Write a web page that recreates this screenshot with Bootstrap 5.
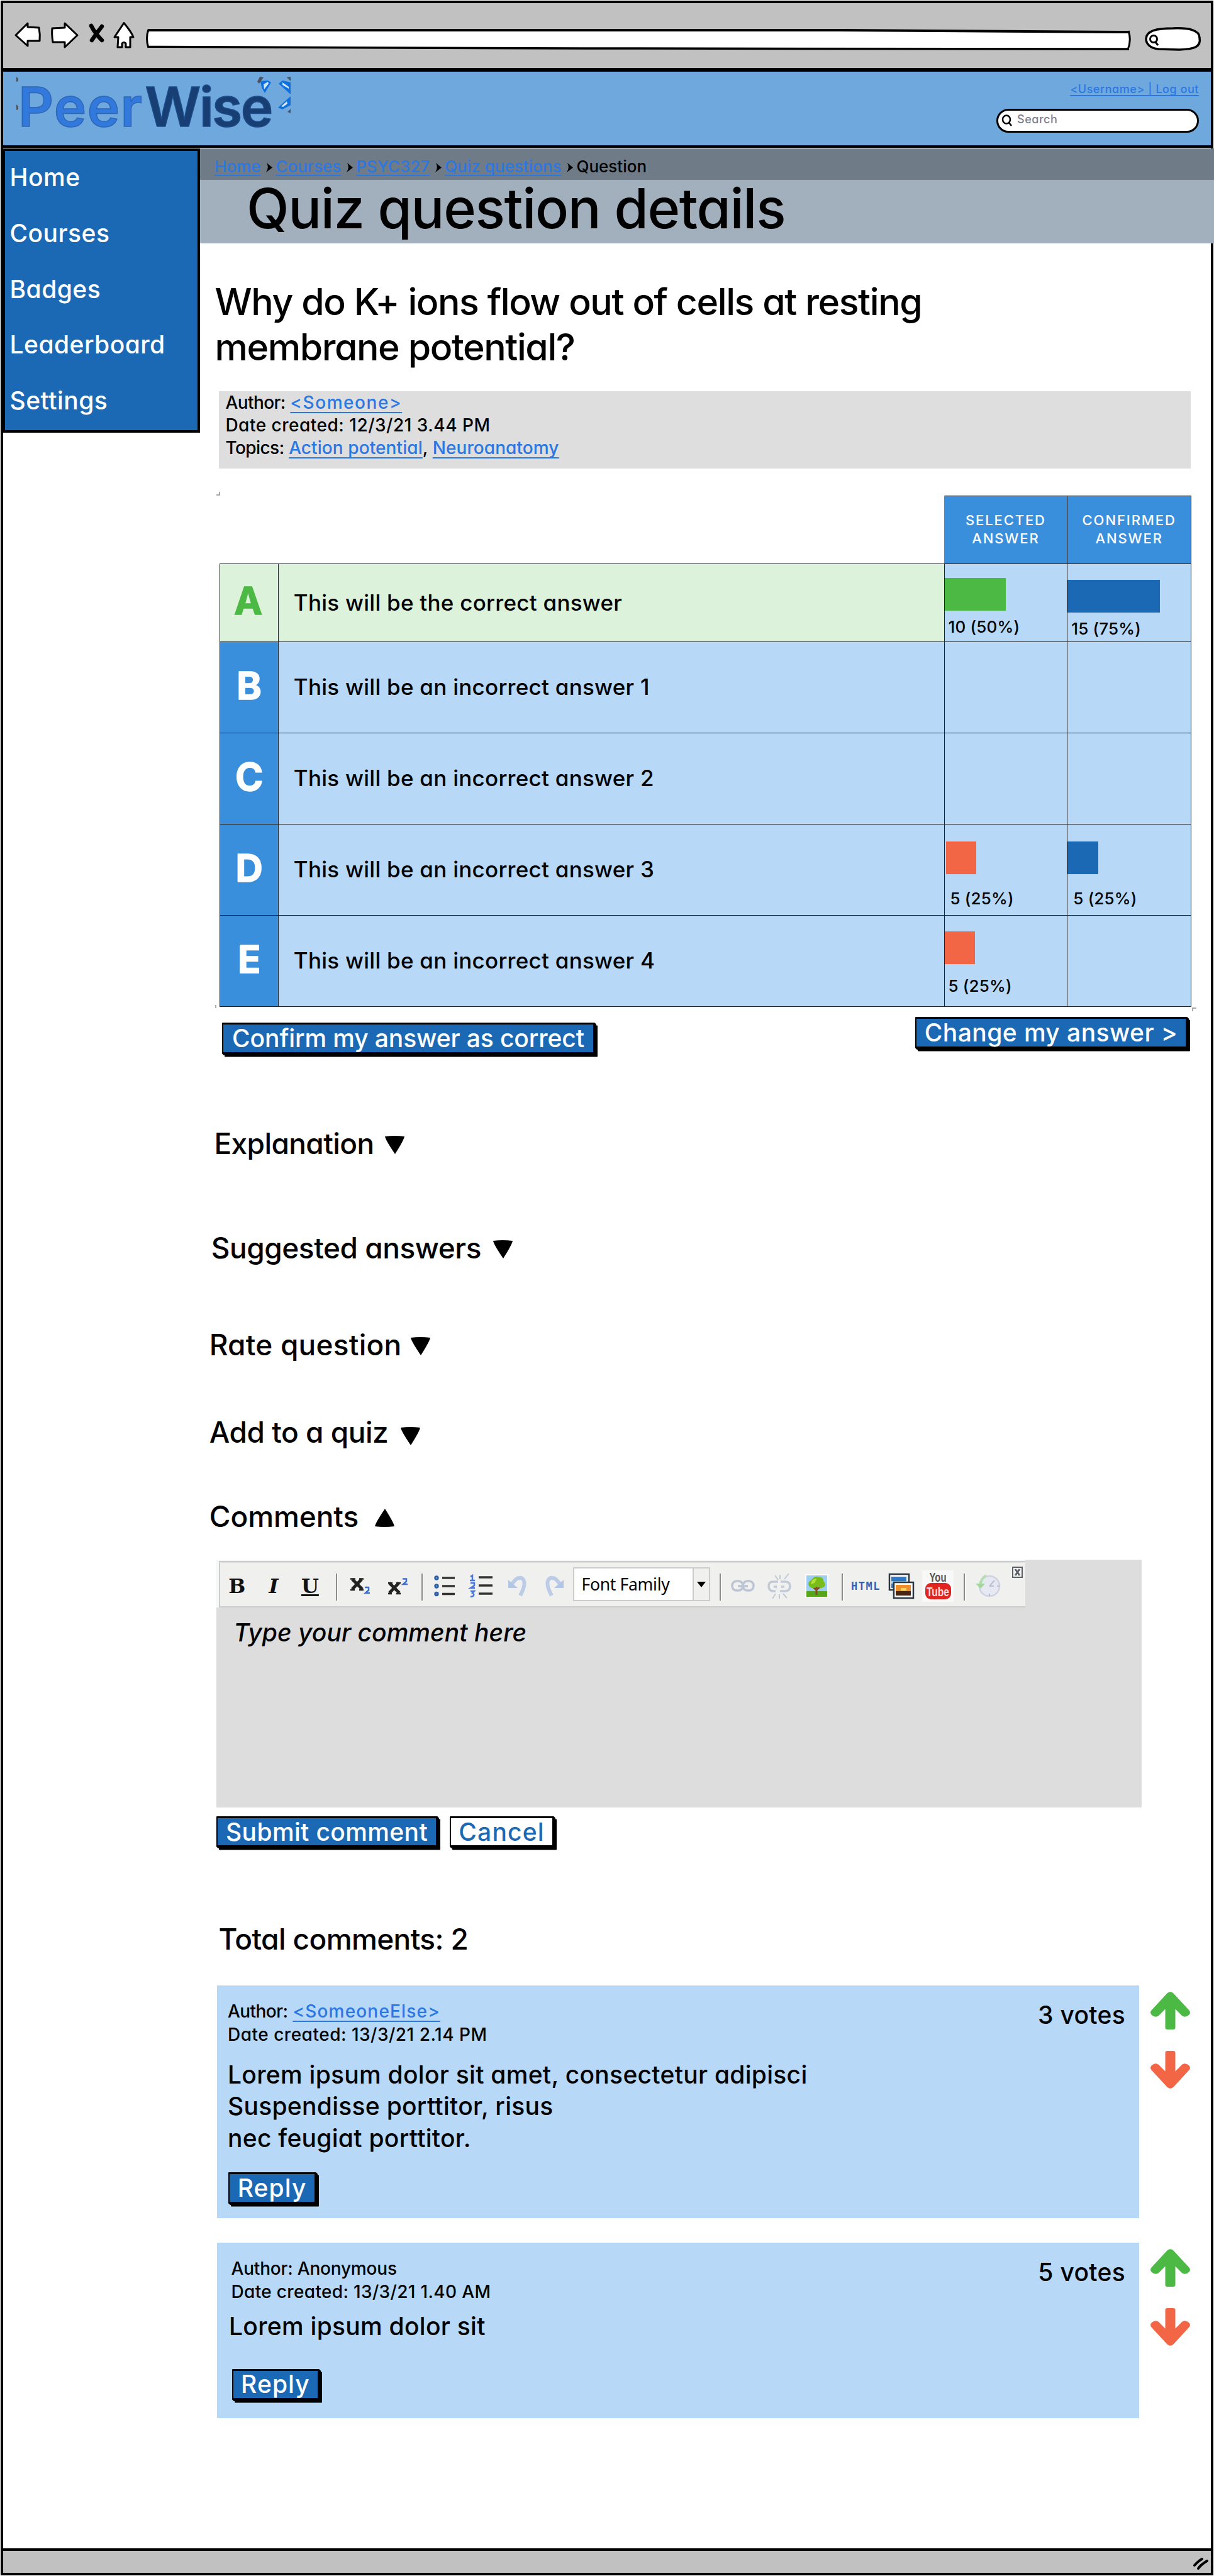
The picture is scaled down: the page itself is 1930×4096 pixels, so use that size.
<!DOCTYPE html>
<html lang="en">
<head>
<meta charset="utf-8">
<meta name="viewport" content="width=device-width, initial-scale=1">
<title>PeerWise - Quiz question details</title>
<link href="https://cdn.jsdelivr.net/npm/bootstrap@5.3.0/dist/css/bootstrap.min.css" rel="stylesheet">
<style>
  :root { --blue:#1b69b4; --mid:#3a8fdc; --pale:#b7d8f7; --link:#2b78e4; --green:#4cb944; --red:#f26645; }
  body { background:#fff; color:#000; font-family:Inter,"Liberation Sans",sans-serif; font-weight:500; font-feature-settings:"cv11"; }
  svg { display:block; overflow:visible; flex:none; }
  a { color:var(--link); text-decoration:underline; text-decoration-thickness:2px; text-underline-offset:5px; text-decoration-skip-ink:none; }
  .window { width:1930px; height:4096px; border:1px solid #fff; }
  .frame { height:100%; border:4px solid #000; }

  .chrome { height:109px; background:#c1c1c1; border-bottom:6px solid #000; padding:30px 14px 0 18px; }
  .chrome .stop { margin:3px 0 0 18px; }
  .chrome .home { margin:0 0 0 14px; }
  .chrome .address { margin:11px 0 0 18px; }
  .chrome .finder { margin:8px 0 0 22px; }
  .site-header { height:121px; background:#6fa8dc; border-bottom:4px solid #000; padding:0 19px 0 24px; }
  .brand { font-size:87px; line-height:111px; font-weight:600; color:#3179dc; -webkit-text-stroke:1.5px #2f66b5; letter-spacing:.016em; }
  .brand b { font-weight:600; color:#173f73; -webkit-text-stroke:1.5px #1d4c8c; letter-spacing:-.027em; margin-left:3px; }
  .sparkle { position:absolute; left:-4px; top:7px; }
  .account { font-size:18px; line-height:20px; letter-spacing:.03em; margin-top:18px; text-underline-offset:3px; text-decoration-thickness:1.5px; }
  .search-box { width:322px; height:38px; margin-top:21px; background:#fff; border:3.5px solid #000; border-radius:19px; padding:0 0 3px 5px; font-size:18px; color:#7e7e8c; letter-spacing:.03em; gap:7px; }
  .search-box span { margin-top:-3px; }

  .side { width:313px; height:452px; margin-top:1px; background:var(--blue); border:4px solid #000; border-left-width:3px; padding:0 0 0 7.5px; font-size:39px; letter-spacing:.012em; }
  .side a { color:#fff; text-decoration:none; line-height:83.5px; height:89px; white-space:nowrap; }
  .main-col { margin:1px -5px 0 0; width:1612px; white-space:nowrap; }
  .crumbs { height:50px; background:#6f7b87; padding:15.5px 0 0 23px; font-size:26px; line-height:26px; }
  .crumbs a { text-underline-offset:4px; }
  .crumbs svg { margin:7px 5px 0 9px; }
  .title-bar { height:101px; background:#a2afbd; padding-left:74px; margin:0; font-size:88px; line-height:90px; font-weight:500; letter-spacing:-.0155em; }
  .question { margin:56.5px 0 0 23.5px; font-size:59px; line-height:72.5px; font-weight:500; letter-spacing:-.0242em; }
  .info { margin:33px 0 0 30.4px; width:1545px; height:123px; background:#dedede; padding-left:10px; font-size:28px; line-height:36.4px; letter-spacing:.003em; }
  .dated { letter-spacing:.018em; }
  .wide { letter-spacing:.055em; }
  .label { letter-spacing:-.02em; }

  .sheet { width:1576px; }
  .answers { margin:43px 0 0 31px; width:1545px; table-layout:fixed; border-collapse:collapse; }
  .c1 { width:93.3px; } .c3 { width:195.8px; } .c4 { width:196.7px; }
  .answers td, .answers th { border:1.5px solid #1d2329; padding:0; }
  .answers .blank { border-color:transparent transparent #1d2329 transparent; }
  .answers thead th { background:var(--mid); color:#fff; height:108px; font-size:22px; line-height:29px; font-weight:500; letter-spacing:.086em; text-align:center; }
  .answers thead th.blank { background:none; }
  .answers tbody tr { height:145.1px; }
  .answers tbody tr:first-child { height:124px; }
  .answers tbody th { background:var(--mid); color:#fff; font-size:60px; line-height:60px; font-weight:700; text-align:center; -webkit-text-stroke:1.5px currentColor; vertical-align:middle; padding-bottom:6px; }
  .answers tbody td { background:var(--pale); font-size:35px; line-height:40px; letter-spacing:.0073em; vertical-align:middle; padding:0 0 1px 23.5px; }
  .answers .right-row th, .answers .right-row td:nth-child(2) { background:#dcf2db; }
  .answers .right-row th { color:var(--green); padding-right:3px; }
  .answers tbody td.tally { padding:0; vertical-align:top; font-size:26px; line-height:26px; letter-spacing:.006em; }
  .bar { height:52px; margin-bottom:13px; }
  .tally span { display:block; padding-left:6px; }
  .t1 { margin-top:22px; } .t2 { margin-top:25px; }
  .far { margin:27px 0 26.5px; } .near { margin-bottom:22px; }
  .inset { margin-left:2px; }
  .tally .in { padding-left:9px; }

  .sk { height:49.5px; background:var(--blue); color:#fff; border:3.5px solid #000; border-width:3.5px 3px 3.5px 2.5px; border-radius:1px; box-shadow:1px 1px 0 #000,2px 2px 0 #000,4px 4.5px 0 #000; font-size:39px; line-height:42px; font-weight:500; text-align:center; padding:0; }
  .sk-light { background:#fff; color:var(--blue); }
  .actions { height:60px; margin:16.5px 0 0 35px; width:1535px; }
  .confirm { width:593px; margin-top:9px; letter-spacing:-.0027em; }
  .change { width:433px; letter-spacing:.011em; }

  .fold { font-size:46px; line-height:46px; font-weight:500; margin:0; }
  .fold svg { margin-top:11px; }
  .f1 { margin:118px 0 0 22.4px; letter-spacing:-.013em; gap:18px; }
  .f2 { margin:120px 0 0 17.7px; letter-spacing:-.0098em; gap:19px; }
  .f3 { margin:107.7px 0 0 14.7px; letter-spacing:.005em; gap:15px; }
  .f4 { margin:92.7px 0 0 14.8px; letter-spacing:-.0105em; gap:20px; }
  .f4 svg { margin-top:15px; }
  .f5 { margin:88px 0 0 14.8px; letter-spacing:-.0015em; gap:26px; }

  .editor { margin:46.7px 0 0 25.7px; width:1471px; height:393.5px; background:#ddd; }
  .tools-edge { width:1286px; padding:2px 0 0 4.8px; background:#f3f7f7; }
  .tools { height:73.5px; background:#f0f0ee; border:solid #ccc; border-width:2px 0 2.5px 2px; box-shadow:inset 0 1px 0 #e2e2e0; }
  .slot { width:58px; display:flex; justify-content:center; align-items:center; padding-top:5px; font-family:"DejaVu Serif",serif; font-weight:700; font-size:32px; line-height:1; color:#111; flex:none; }
  .slot:first-child { margin-left:-2.6px; }
  .slot-html { font:700 17px "DejaVu Sans Mono",monospace; color:#3561b4; letter-spacing:1.5px; padding-left:3px; }
  .rule-v { width:20px; flex:none; padding:18px 0 0 12px; }
  .rule-v::before { content:""; display:block; width:3px; height:43px; background:#8f8a8c; border-right:1px solid #fff; }
  .font-pick { width:217.5px; height:54px; margin:8px 3px 0 1.6px; border:2px solid #ccc; background:#fff; font:400 26.5px/50px "Noto Sans","Open Sans",sans-serif; letter-spacing:-.3px; padding-left:11px; flex:none; }
  .font-pick i { width:26px; border-left:2px solid #ccc; background:#f0f0ee; display:flex; align-items:center; justify-content:center; }
  .shut { margin:7px 0 0 11px; }
  .ghost { margin:20.5px 0 0 27.5px; font-size:39px; line-height:40px; font-style:italic; letter-spacing:.001em; }
  .send { margin:14px 0 0 25.8px; height:50px; gap:18.5px; }
  .submit-btn { width:352.5px; letter-spacing:.0094em; } .cancel-btn { width:166.5px; letter-spacing:.03em; }
  .total { margin:122px 0 0 29.5px; font-size:46px; line-height:46px; letter-spacing:-.0132em; }

  .post-row { margin:51.5px 0 0 27px; gap:18px; }
  .post-row + .post-row { margin-top:39.3px; }
  .post { width:1466px; height:369.7px; background:var(--pale); padding:23px 0 0 17px; }
  .post-short { height:279px; }
  .meta { font-size:28px; line-height:36.4px; letter-spacing:.018em; }
  .link-wide { letter-spacing:.042em; }
  .said { font-size:39px; line-height:50.7px; letter-spacing:.007em; margin:20.5px 0 0 0; }
  .reply { width:139.5px; letter-spacing:.028em; margin-top:28.5px; margin-left:1.3px; }
  .post-short .meta { padding-left:5.5px; letter-spacing:.012em; }
  .post-short .label { letter-spacing:-.007em; }
  .post-short .said { margin:11.3px 0 0 2px; }
  .post-short .reply { margin-top:42.5px; margin-left:6.7px; }
  .votes { font-size:39px; line-height:40px; letter-spacing:.008em; margin:4px 22px 0 0; }
  .arrows { gap:34.4px; padding-top:9.5px; }

  .status { height:39px; background:#c1c1c1; border-top:4px solid #000; padding:11px 4px 0 0; }
  .corner { position:absolute; border:0 solid #aaa; }
  .m1 { left:25.5px; top:-6px; width:6px; height:6px; border-width:0 2.5px 2.5px 0; }
  .m2 { right:-8px; bottom:-7px; width:7px; height:6px; border-width:2px 0 0 2px; }
  .m3 { left:24px; bottom:-2px; width:2px; height:5px; border-left-width:2px; }
</style>
</head>
<body>
<div class="window">
<div class="frame d-flex flex-column">

  <div class="chrome d-flex align-items-start">
    <svg width="42" height="40" viewBox="0 0 42 40" fill="#fff" stroke="#000" stroke-width="3" stroke-linejoin="round"><path d="M21 2 2 21 21 38V30H40Q41 20 39 9L21 8Z"/></svg>
    <svg class="ms-3" width="43" height="41" viewBox="0 0 43 41" fill="#fff" stroke="#000" stroke-width="3" stroke-linejoin="round"><path d="M22 2 42 21 22 40V32H3Q1 20 2 10L22 9Z"/></svg>
    <svg class="stop" width="24" height="30" viewBox="0 0 24 30" fill="none" stroke="#000" stroke-width="6.500" stroke-linecap="round"><path d="M3 3Q9 15 20 26M20 4Q12 14 4 26"/></svg>
    <svg class="home" width="34" height="41" viewBox="0 0 34 41" fill="#fff" stroke="#000" stroke-width="3" stroke-linejoin="round"><path d="M17 1.500 2 24H8L7 40H14V34Q17 31 20 34V40H27V24H32Q29 16 17 1.500Z"/></svg>
    <svg class="address" width="1566" height="34" viewBox="0 0 1566 34" fill="#fff" stroke="#000"><path stroke="none" d="M3 3H1564V31H3Z"/><path stroke-width="4" d="M3 2H1100L1564 5"/><path stroke-width="3.500" d="M4 28.500 700 31 1563 32"/><path stroke-width="3" fill="none" d="M4 1Q-1 15 4 30M1562 3Q1567 18 1561 33"/></svg>
    <svg class="finder" width="90" height="38" viewBox="0 0 90 38" fill="#fff" stroke="#000"><path stroke-width="3.500" d="M45 2C70 1 87 5 87 17C90 32 78 35 55 36L22 35C8 34 2 26 2 19C2 6 18 2 45 2Z"/><g fill="none" stroke-width="3"><ellipse cx="14" cy="19" rx="5.500" ry="5.500"/><path d="M17 24 21 29"/></g></svg>
  </div>

  <header class="site-header d-flex justify-content-between">
    <div class="brand position-relative">Peer<b>Wise</b>
      <svg class="sparkle" width="440" height="60" viewBox="0 0 440 60">
        <g fill="#0f6fdc"><path d="M389 8 401 7 406 10 396 27 391 18Z"/><path d="M437 10 424 7 418 12 437 29Z"/><path d="M437 32 417 50 424 53 437 46Z"/></g>
        <g fill="#cfe6fb"><path d="M394 13 401 9 402 12 395 21Z"/><path d="M424 10 434 17V20L424 14Z"/><path d="M431 40 422 48 425 49 432 44Z"/></g>
        <g fill="#4b545e"><path d="M384 9 388 1 394 2 387 12Z"/><path d="M437 1 431 2 437 8Z"/><path d="M437 52 432 57 437 59Z"/><path d="M1 1 4 4V8L1 9Z"/><path d="M1 45 4 48V53L1 54Z"/></g>
      </svg>
    </div>
    <div class="d-flex flex-column align-items-end">
      <a class="account" href="#">&lt;Username&gt; | Log out</a>
      <div class="search-box d-flex align-items-center">
        <svg width="18" height="18" viewBox="0 0 18 18" fill="none" stroke="#000" stroke-width="2.500"><ellipse cx="8" cy="8" rx="6" ry="6.500"/><path d="M12 13 16 18"/></svg>
        <span>Search</span>
      </div>
    </div>
  </header>

  <div class="d-flex flex-grow-1">
    <nav class="side d-flex flex-column flex-shrink-0">
      <a href="#">Home</a><a href="#">Courses</a><a href="#">Badges</a><a href="#">Leaderboard</a><a href="#">Settings</a>
    </nav>

    <main class="main-col flex-shrink-0">
      <nav class="crumbs d-flex align-items-start">
        <a href="#">Home</a><svg width="10" height="15"><path d="M1 0 10 7.500 0 15Q5 7.500 1 0Z"/></svg>
        <a href="#">Courses</a><svg width="10" height="15"><path d="M1 0 10 7.500 0 15Q5 7.500 1 0Z"/></svg>
        <a href="#">PSYC327</a><svg width="10" height="15"><path d="M1 0 10 7.500 0 15Q5 7.500 1 0Z"/></svg>
        <a href="#">Quiz questions</a><svg width="10" height="15"><path d="M1 0 10 7.500 0 15Q5 7.500 1 0Z"/></svg>
        <span>Question</span>
      </nav>
      <h1 class="title-bar">Quiz question details</h1>

      <h2 class="question mb-0">Why do K+ ions flow out of cells at resting<br>membrane potential?</h2>

      <div class="info">
        <div><span class="label">Author:</span> <a class="wide" href="#">&lt;Someone&gt;</a></div>
        <div class="dated">Date created: 12/3/21 3.44 PM</div>
        <div><span class="label">Topics:</span> <a href="#">Action potential</a>, <a href="#">Neuroanatomy</a></div>
      </div>

      <div class="sheet position-relative">
        <table class="answers">
          <colgroup><col class="c1"><col><col class="c3"><col class="c4"></colgroup>
          <thead><tr><th class="blank" colspan="2"></th><th>SELECTED<br>ANSWER</th><th>CONFIRMED<br>ANSWER</th></tr></thead>
          <tbody>
            <tr class="right-row"><th>A</th><td>This will be the correct answer</td>
              <td class="tally"><div class="bar t1" style="width:50%;background:var(--green)"></div><span>10 (50%)</span></td>
              <td class="tally"><div class="bar t2" style="width:75%;background:var(--blue)"></div><span>15 (75%)</span></td></tr>
            <tr><th>B</th><td>This will be an incorrect answer 1</td><td></td><td></td></tr>
            <tr><th>C</th><td>This will be an incorrect answer 2</td><td></td><td></td></tr>
            <tr><th>D</th><td>This will be an incorrect answer 3</td>
              <td class="tally"><div class="bar far inset" style="width:25%;background:var(--red)"></div><span class="in">5 (25%)</span></td>
              <td class="tally"><div class="bar far" style="width:25%;background:var(--blue)"></div><span class="in">5 (25%)</span></td></tr>
            <tr><th>E</th><td>This will be an incorrect answer 4</td>
              <td class="tally"><div class="bar t2 near" style="width:25%;background:var(--red)"></div><span>5 (25%)</span></td><td></td></tr>
          </tbody>
        </table>
        <span class="corner m1"></span><span class="corner m2"></span><span class="corner m3"></span>
      </div>

      <div class="actions d-flex justify-content-between align-items-start">
        <button class="sk confirm">Confirm my answer as correct</button>
        <button class="sk change">Change my answer &gt;</button>
      </div>

      <h3 class="fold f1 d-flex">Explanation <svg width="31" height="29"><path d="M0 1Q15-1 31 1 30 7 16 29 1 7 0 1Z"/></svg></h3>
      <h3 class="fold f2 d-flex">Suggested answers <svg width="31" height="29"><path d="M0 1Q15-1 31 1 30 7 16 29 1 7 0 1Z"/></svg></h3>
      <h3 class="fold f3 d-flex">Rate question <svg width="31" height="29"><path d="M0 1Q15-1 31 1 30 7 16 29 1 7 0 1Z"/></svg></h3>
      <h3 class="fold f4 d-flex">Add to a quiz <svg width="31" height="29"><path d="M0 1Q15-1 31 1 30 7 16 29 1 7 0 1Z"/></svg></h3>
      <h3 class="fold f5 d-flex">Comments <svg width="31" height="29"><path d="M0 28Q15 30 31 28 30 22 16 0 1 22 0 28Z"/></svg></h3>

      <div class="editor">
        <div class="tools-edge">
        <div class="tools d-flex">
          <div class="slot">B</div>
          <div class="slot fst-italic">I</div>
          <div class="slot text-decoration-underline">U</div>
          <div class="rule-v"></div>
          <div class="slot ps-1"><svg width="31" height="26" fill="none"><path stroke="#222" stroke-width="5" d="M3 2 19 18M18 2 3 18"/><path stroke="#222" stroke-width="2.500" d="M0 1.500H8M14 1.500H21M0 19H7M14 19H21"/><path stroke="#3f6fd0" stroke-width="2.500" d="M23 15H29V19.500L24 24H31"/></svg></div>
          <div class="slot ps-2"><svg width="31" height="26" fill="none"><path stroke="#222" stroke-width="5" d="M2 8 18 24M17 8 2 24"/><path stroke="#222" stroke-width="2.500" d="M0 8H7M13 8H20M0 25H6M13 25H20"/><path stroke="#3f6fd0" stroke-width="2.500" d="M23 1.500H29V5.500L24 10H31"/></svg></div>
          <div class="rule-v"></div>
          <div class="slot"><svg width="33" height="34" fill="none"><path stroke="#333" stroke-width="3.500" d="M13 4H33M13 17H33M13 29.500H33"/><g stroke="#2f5fa8" stroke-width="3"><circle cx="4" cy="4" r="2.200"/><circle cx="4" cy="17" r="2.200"/><circle cx="4" cy="29.500" r="2.200"/></g></svg></div>
          <div class="slot"><svg width="36" height="36" fill="none"><path stroke="#333" stroke-width="3.500" d="M14 4H36M14 17H36M14 30H36"/><path stroke="#4a77dc" stroke-width="2.500" d="M1 3 4 1V9M0 9H8M1 13H7V17L1 21H8M1 26H7L4 29Q8 31 5 34L1 35"/></svg></div>
          <div class="slot"><svg width="30" height="34" fill="none"><path stroke="#bccbe6" stroke-width="6" d="M5 16Q12 2 21 4 31 10 19 32"/><path fill="#b4c6e6" d="M0 7 15 20H0Z"/></svg></div>
          <div class="slot"><svg width="30" height="34" fill="none"><path stroke="#bccbe6" stroke-width="6" d="M25 16Q18 2 9 4-1 10 11 32"/><path fill="#b4c6e6" d="M30 7 15 20H30Z"/></svg></div>
          <div class="font-pick d-flex justify-content-between">Font Family<i><svg width="14" height="9"><path d="M0 0H14L7 9Z"/></svg></i></div>
          <div class="rule-v"></div>
          <div class="slot"><svg width="38" height="20" fill="none" stroke="#bcc5d4" stroke-width="3.500"><rect x="2" y="2" width="17" height="15" rx="7"/><rect x="19" y="2" width="17" height="15" rx="7"/><path d="M11 10H27"/></svg></div>
          <div class="slot"><svg width="38" height="40" fill="none" stroke="#c3cad7" stroke-width="3.500"><path d="M17 13H9Q2 13 2 20 2 28 10 28H13M21 13H28Q36 13 36 20 36 28 28 28H20M10 21H15M22 21H27"/><path stroke-width="2" d="M12 3 17 10M20 2V9M34 0 27 9M8 40 13 32M19 33V40M25 32 31 39"/></svg></div>
          <div class="slot ps-1"><svg width="37" height="38"><path fill="#fff" d="M0 0H37V38H0Z"/><path fill="#9ccdf3" d="M2 2H35V28H2Z"/><path fill="#58a51c" d="M2 27H35V36H2Z"/><path fill="none" stroke="#8a4b22" stroke-width="3" d="M18 33V19M18 25 11 19M19 24 26 18"/><path fill="#79bd1b" d="M10 9Q14 3 21 4 30 5 29 11 35 17 29 21 23 24 20 19 13 25 7 20 2 14 10 9Z"/><path fill="#b3e13c" d="M11 10Q15 6 18 8L15 14 9 16Z"/></svg></div>
          <div class="rule-v"></div>
          <div class="slot slot-html">HTML</div>
          <div class="slot"><svg width="42" height="42"><path fill="#fff" stroke="#2c3640" stroke-width="2.500" d="M2 2H33V27H2Z"/><path fill="#2f78c8" d="M5 6H29V24H5Z"/><path fill="#9fd0f0" d="M5 13H29V17H5Z"/><path fill="#fff" stroke="#2c3640" stroke-width="2.500" d="M9 15H40V40H9Z"/><path fill="#ef8f2c" d="M12 19H36V36H12Z"/><path fill="#4a2412" d="M12 29H36V36H12Z"/><path fill="#ffd65a" d="M20 24H29V28H20Z"/></svg></div>
          <div class="slot"><svg width="50" height="50" font-family="Liberation Sans, sans-serif" font-weight="700" text-anchor="middle"><path fill="#f8f8f8" d="M0 0H50V50H0Z"/><rect x="5" y="20" width="41" height="26" rx="9" fill="#e02420"/><text x="25" y="18" font-size="20" textLength="27" lengthAdjust="spacingAndGlyphs" fill="#555">You</text><text x="25" y="41" font-size="21" textLength="36" lengthAdjust="spacingAndGlyphs" fill="#fbdcdc">Tube</text></svg></div>
          <div class="rule-v"></div>
          <div class="slot ps-1"><svg width="40" height="36" fill="none"><circle cx="22" cy="18" r="16" fill="#e6e8f2" stroke="#cfd2e2" stroke-width="2.500"/><path stroke="#b9bfd4" stroke-width="2" d="M22 18 30 9M22 18H29M22 30V34M34 18H38"/><path stroke="#b5deb0" stroke-width="4" d="M17 1Q8 6 8 16"/><path fill="#a3d69c" d="M0 14H15L8 22Z"/></svg></div>
          <div class="shut"><svg width="17" height="18" fill="#f5f5f5" stroke="#5b5f66" stroke-width="2"><path d="M1 1H16V17H1Z"/><path stroke-width="3" d="M5 4 12 14M12 4 5 14"/></svg></div>
        </div>
        </div>
        <div class="ghost">Type your comment here</div>
      </div>

      <div class="send d-flex">
        <button class="sk submit-btn">Submit comment</button>
        <button class="sk sk-light cancel-btn">Cancel</button>
      </div>

      <div class="total">Total comments: 2</div>

      <div class="post-row d-flex">
        <article class="post d-flex justify-content-between">
          <div>
            <div class="meta"><span class="label">Author:</span> <a class="link-wide" href="#">&lt;SomeoneElse&gt;</a><br>Date created: 13/3/21 2.14 PM</div>
            <div class="said">Lorem ipsum dolor sit amet, consectetur adipisci<br>Suspendisse porttitor, risus<br>nec feugiat porttitor.</div>
            <button class="sk reply">Reply</button>
          </div>
          <div class="votes">3 votes</div>
        </article>
        <div class="arrows d-flex flex-column">
          <svg width="63" height="60" fill="#4cb944"><path d="M26.500 2.500Q31.500-2 36.500 2.500L61 29Q65 33 61 37 54 43 48 36L39.500 27.500V57Q39.500 60 36 60H27Q23.500 60 23.500 57V27.500L15 36Q9 43 2 37-2 33 2 29Z"/></svg>
          <svg width="63" height="60" fill="#f26645"><path transform="matrix(1 0 0 -1 0 60)" d="M26.500 2.500Q31.500-2 36.500 2.500L61 29Q65 33 61 37 54 43 48 36L39.500 27.500V57Q39.500 60 36 60H27Q23.500 60 23.500 57V27.500L15 36Q9 43 2 37-2 33 2 29Z"/></svg>
        </div>
      </div>

      <div class="post-row d-flex">
        <article class="post post-short d-flex justify-content-between">
          <div>
            <div class="meta"><span class="label">Author: Anonymous</span><br>Date created: 13/3/21 1.40 AM</div>
            <div class="said">Lorem ipsum dolor sit</div>
            <button class="sk reply">Reply</button>
          </div>
          <div class="votes">5 votes</div>
        </article>
        <div class="arrows d-flex flex-column">
          <svg width="63" height="60" fill="#4cb944"><path d="M26.500 2.500Q31.500-2 36.500 2.500L61 29Q65 33 61 37 54 43 48 36L39.500 27.500V57Q39.500 60 36 60H27Q23.500 60 23.500 57V27.500L15 36Q9 43 2 37-2 33 2 29Z"/></svg>
          <svg width="63" height="60" fill="#f26645"><path transform="matrix(1 0 0 -1 0 60)" d="M26.500 2.500Q31.500-2 36.500 2.500L61 29Q65 33 61 37 54 43 48 36L39.500 27.500V57Q39.500 60 36 60H27Q23.500 60 23.500 57V27.500L15 36Q9 43 2 37-2 33 2 29Z"/></svg>
        </div>
      </div>
    </main>
  </div>

  <footer class="status d-flex justify-content-end">
    <svg width="24" height="19" fill="none" stroke="#000" stroke-width="4" stroke-linecap="round"><path d="M2 12Q8 5 14 2M8 17Q12 11 22 5"/></svg>
  </footer>
</div>
</div>
<script src="https://cdn.jsdelivr.net/npm/bootstrap@5.3.0/dist/js/bootstrap.bundle.min.js"></script>
</body>
</html>
